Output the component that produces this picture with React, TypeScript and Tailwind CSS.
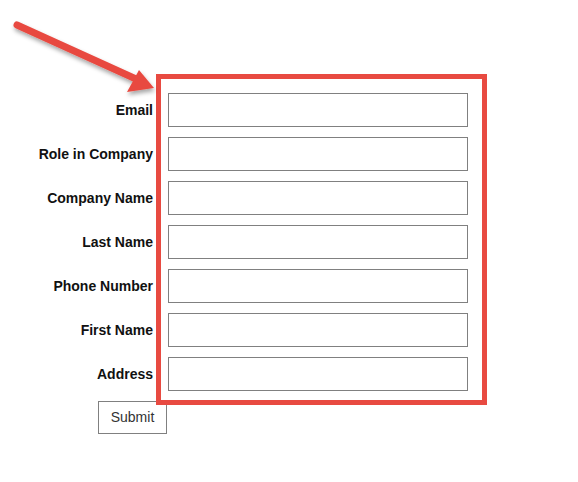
const fields = ["Email", "Role in Company", "Company Name", "Last Name", "Phone Number", "First Name", "Address"];

export default function App() {
  return (
    <div className="relative h-[482px] w-[578px] bg-white font-['Liberation_Sans',Arial,sans-serif]">
      <form className="pt-[93px]" onSubmit={(e) => e.preventDefault()}>
        {fields.map((f) => (
          <div key={f} className="mb-[10px] flex items-center">
            <label className="w-[153px] text-right text-[14px] font-bold text-[#111]">{f}</label>
            <input type="text" className="ml-[15px] h-[34px] w-[300px] border border-[#808080] bg-white outline-none" />
          </div>
        ))}
        <button
          type="submit"
          className="ml-[98px] h-[33px] w-[69px] border border-[#808080] bg-white text-[14px] text-[#333]"
        >
          Submit
        </button>
      </form>

      {/* annotation overlay */}
      <div className="pointer-events-none absolute left-[156px] top-[74px] h-[331px] w-[331px] border-[5px] border-[#e84a41]" />
      <svg className="pointer-events-none absolute left-0 top-0" width="200" height="120">
        <defs>
          <filter id="sh" x="-20%" y="-20%" width="140%" height="160%">
            <feDropShadow dx="1" dy="3" stdDeviation="2" floodColor="#000" floodOpacity="0.35" />
          </filter>
        </defs>
        <g filter="url(#sh)">
          <line x1="17" y1="25" x2="136" y2="79" stroke="#e84a41" strokeWidth="7" strokeLinecap="round" />
          <polygon points="154,88 127,92 139,70" fill="#e84a41" />
        </g>
      </svg>
    </div>
  );
}
